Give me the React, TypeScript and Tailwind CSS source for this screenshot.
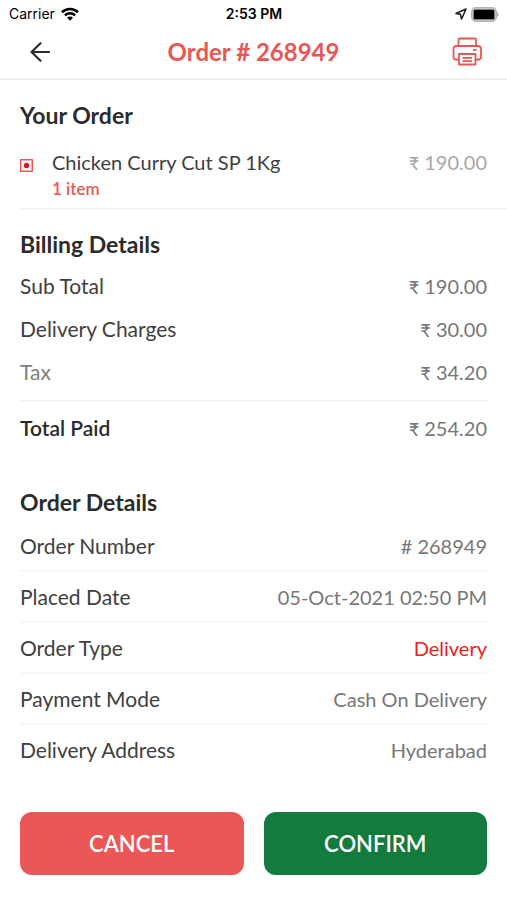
type LineItem = { label: string; value: string; labelClass?: string; valueClass?: string };

const charges: LineItem[] = [
  { label: "Sub Total", value: "190.00" },
  { label: "Delivery Charges", value: "30.00" },
  { label: "Tax", value: "34.20", labelClass: "text-[#808080]" },
];

const details: LineItem[] = [
  { label: "Order Number", value: "# 268949" },
  { label: "Placed Date", value: "05-Oct-2021 02:50 PM" },
  { label: "Order Type", value: "Delivery", valueClass: "text-[#ee1c1c]" },
  { label: "Payment Mode", value: "Cash On Delivery" },
  { label: "Delivery Address", value: "Hyderabad" },
];

function Price({ amount }: { amount: string }) {
  return (
    <>
      <span className="text-lg leading-none font-medium">₹</span> {amount}
    </>
  );
}

function StatusBar() {
  return (
    <div className="grid h-7 grid-cols-3 items-center pr-2 pl-[9px] font-['Inter',sans-serif] text-sm text-black">
      <div className="flex items-center gap-1.5">
        <span>Carrier</span>
        <svg className="h-[14px] w-[18px]" viewBox="0 0 18 14" fill="none">
          <path d="M1 5.2C5.4.9 12.6.9 17 5.2" stroke="#000" strokeWidth="2.6" />
          <path d="M3.9 8.3c2.9-2.7 7.3-2.7 10.2 0" stroke="#000" strokeWidth="2.4" />
          <path d="M9 13.8 6 10.8c1.7-1.6 4.3-1.6 6 0z" fill="#000" />
        </svg>
      </div>
      <span className="text-center font-semibold">2:53 PM</span>
      <div className="flex items-center justify-end gap-1">
        <svg className="h-3 w-3" viewBox="0 0 12 12" fill="none" stroke="#222" strokeWidth="1.6" strokeLinejoin="round">
          <path d="M11 1 1 5.4l4.4 1L6.600 11z" />
        </svg>
        <svg className="h-[15px] w-[28px]" viewBox="0 0 28 15">
          <rect x=".9" y=".9" width="24.2" height="13.2" rx="4" fill="#fff" stroke="#b4b4b4" strokeWidth="1.8" />
          <rect x="2.500" y="2.500" width="21" height="10" rx="1.500" fill="#000" />
          <path d="M26 5c2.2.6 2.2 4.400 0 5z" fill="#b4b4b4" />
        </svg>
      </div>
    </div>
  );
}

function Header() {
  return (
    <header className="grid h-[52px] grid-cols-[40px_1fr_40px] items-center border-b-2 border-[#efefef] px-5 pb-0.5">
      <button type="button" aria-label="Back" className="flex h-10 items-center justify-center">
        <svg className="size-5" viewBox="0 0 20 20" fill="none" stroke="#2b2b2b" strokeWidth="2.2" strokeLinecap="round" strokeLinejoin="round">
          <path d="M19 10H1.500M10.500 1.200 1.500 10l9 8.800" />
        </svg>
      </button>
      <h1 className="text-center text-2xl leading-7 font-bold text-[#ea5654]">Order # 268949</h1>
      <button type="button" aria-label="Print" className="flex h-10 items-center justify-center">
        <svg className="size-[30px]" viewBox="0 0 30 30" fill="none" stroke="#ea5654" strokeWidth="1.8" strokeLinejoin="round">
          <path d="M6.500 9V2.500Q6.500 1.500 7.500 1.500H23Q24 1.500 24 2.500V9" />
          <path d="M7 22.500H4Q1.500 22.500 1.500 20V12Q1.500 9 4.500 9H26Q29 9 29 12V20Q29 22.500 26.500 22.500H23.500" />
          <path d="M7 17H23.500V27.500H7z" />
          <path d="M10.500 20.800H20M10.500 24.200H20M21 12.800H24.500" />
        </svg>
      </button>
    </header>
  );
}

export default function App() {
  return (
    <div className="bg-white font-['Lato','Noto_Sans',sans-serif] text-xl leading-6 text-[#404040]">
      <StatusBar />
      <Header />

      <main className="px-5">
        <section className="-mr-5 border-b-2 border-[#f5f5f5] pt-[21px] pr-5 pb-[7px]">
          <h2 className="text-[23px] leading-7 font-bold text-[#2b2b2b]">Your Order</h2>
          <div className="mt-[21px] flex items-start">
            <svg className="mt-[9px] size-[13px]" viewBox="0 0 13 13" role="img" aria-label="Non-vegetarian">
              <rect x=".75" y=".75" width="11.5" height="11.5" fill="#fff" stroke="#f04040" strokeWidth="1.3" />
              <circle cx="6.5" cy="6.5" r="2.7" fill="#f01010" />
            </svg>
            <div className="ml-[19px] flex-1">
              <p>Chicken Curry Cut SP 1Kg</p>
              <p className="mt-[3px] text-[17px] font-semibold text-[#ea5654]">1 item</p>
            </div>
            <p className="text-[#a8a8a8]">
              <Price amount="190.00" />
            </p>
          </div>
        </section>

        <section className="pt-5">
          <h2 className="text-[23px] leading-7 font-bold text-[#2b2b2b]">Billing Details</h2>
          <dl className="mt-4 flex flex-col gap-[19px]">
            {charges.map((row) => (
              <div key={row.label} className="flex justify-between">
                <dt className={`text-[21px] ${row.labelClass ?? ""}`}>{row.label}</dt>
                <dd className="text-[#777]">
                  <Price amount={row.value} />
                </dd>
              </div>
            ))}
            <div className="-mt-[3px] flex justify-between border-t-2 border-[#f5f5f5] pt-[14px]">
              <dt className="text-[21px] font-semibold text-[#2b2b2b]">Total Paid</dt>
              <dd className="text-[#777]">
                <Price amount="254.20" />
              </dd>
            </div>
          </dl>
        </section>

        <section className="pt-12">
          <h2 className="text-[23px] leading-7 font-bold text-[#2b2b2b]">Order Details</h2>
          <dl className="mt-[5px] divide-y-2 divide-[#f7f7f7]">
            {details.map((row) => (
              <div key={row.label} className="flex justify-between pt-[13px] pb-3">
                <dt className="text-[21px]">{row.label}</dt>
                <dd className={row.valueClass ?? "text-[#777]"}>{row.value}</dd>
              </div>
            ))}
          </dl>
        </section>

        <div className="mt-[38px] grid grid-cols-2 gap-5 pb-6">
          <button type="button" className="h-[63px] rounded-xl bg-[#eb5757] text-[22px] font-semibold text-white">
            CANCEL
          </button>
          <button type="button" className="h-[63px] rounded-xl bg-[#147b3e] text-[22px] font-semibold text-white">
            CONFIRM
          </button>
        </div>
      </main>
    </div>
  );
}
